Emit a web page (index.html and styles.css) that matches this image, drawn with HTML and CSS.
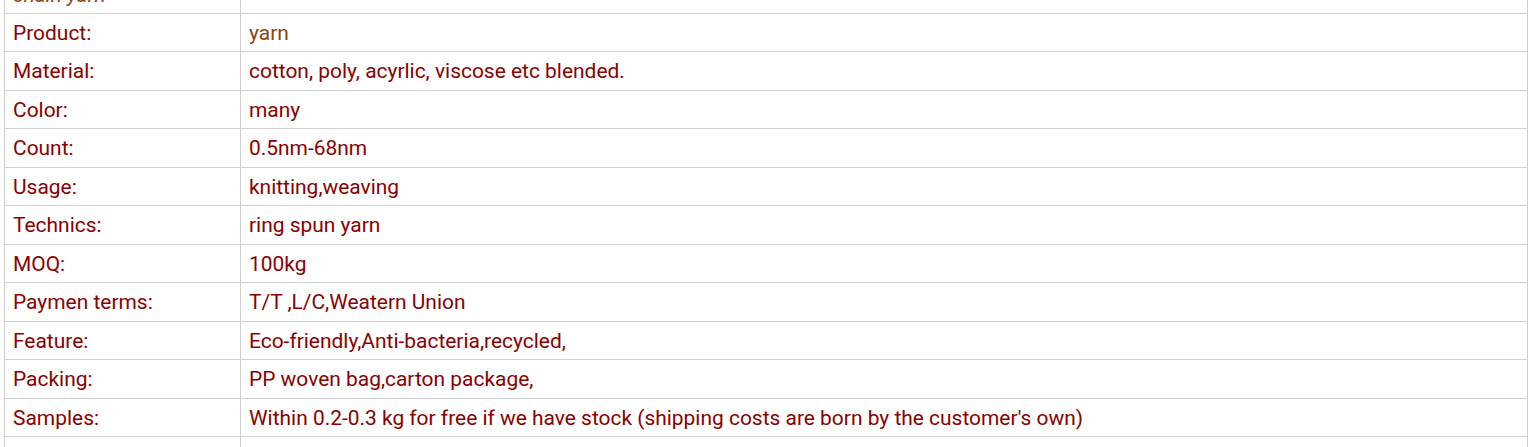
FILE: index.html
```html
<!DOCTYPE html>
<html>
<head>
<meta charset="utf-8">
<link rel="stylesheet" href="styles.css">
</head>
<body>
<table class="spec">
  <tr><td class="label italic brown">chain yarn</td><td class="value"></td></tr>
  <tr><td class="label">Product:</td><td class="value brown">yarn</td></tr>
  <tr><td class="label">Material:</td><td class="value">cotton, poly, acyrlic, viscose etc blended.</td></tr>
  <tr><td class="label">Color:</td><td class="value">many</td></tr>
  <tr><td class="label">Count:</td><td class="value">0.5nm-68nm</td></tr>
  <tr><td class="label">Usage:</td><td class="value">knitting,weaving</td></tr>
  <tr><td class="label">Technics:</td><td class="value">ring spun yarn</td></tr>
  <tr><td class="label">MOQ:</td><td class="value">100kg</td></tr>
  <tr><td class="label">Paymen terms:</td><td class="value">T/T ,L/C,Weatern Union</td></tr>
  <tr><td class="label">Feature:</td><td class="value">Eco-friendly,Anti-bacteria,recycled,</td></tr>
  <tr><td class="label">Packing:</td><td class="value">PP woven bag,carton package,</td></tr>
  <tr><td class="label">Samples:</td><td class="value">Within 0.2-0.3 kg for free if we have stock (shipping costs are born by the customer's own)</td></tr>
  <tr><td class="label">&nbsp;</td><td class="value">&nbsp;</td></tr>
</table>
</body>
</html>
```
FILE: styles.css
```css
html, body {
  margin: 0;
  padding: 0;
  background: #fff;
  overflow: hidden;
}
body {
  font-family: Roboto, "Liberation Sans", sans-serif;
  font-size: 20.95px;
  color: #8b0000;
}
.spec {
  border-collapse: collapse;
  width: 1524px;
  margin: -25.45px 0 0 4px;
  table-layout: fixed;
}
.spec td {
  border: 1px solid #cfcfcf;
  padding: 9px 8px 7px;
  line-height: 21.45px;
  vertical-align: middle;
  white-space: nowrap;
}
.spec .label {
  width: 219px;
}
.brown {
  color: #8a4513;
}
.italic {
  font-style: italic;
}
```
